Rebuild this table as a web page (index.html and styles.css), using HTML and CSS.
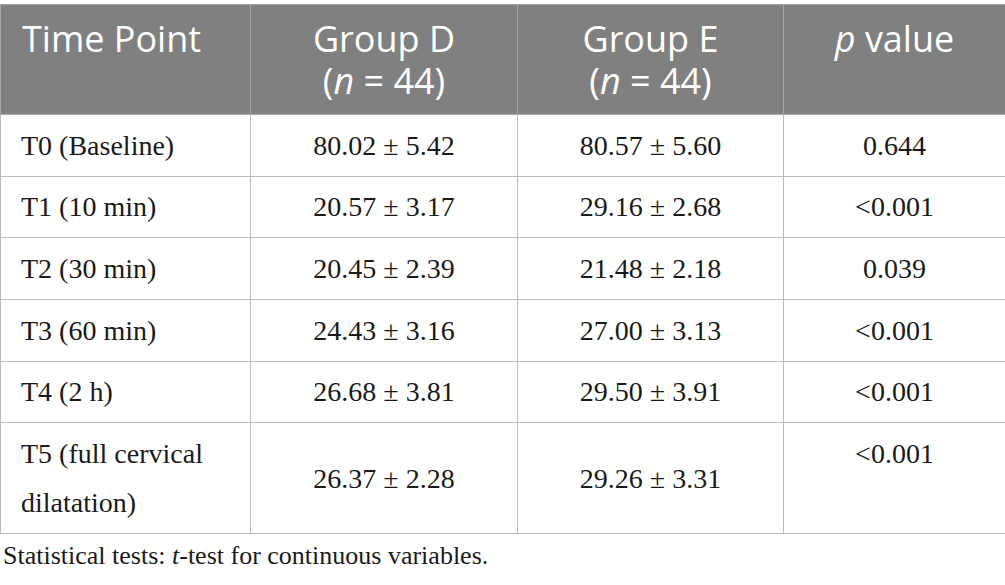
FILE: index.html
```html
<!DOCTYPE html>
<html>
<head>
<meta charset="utf-8">
<link rel="stylesheet" href="styles.css">
</head>
<body>
<div class="wrap">
<table class="data">
  <colgroup>
    <col class="c1"><col class="c2"><col class="c3"><col class="c4">
  </colgroup>
  <thead>
    <tr>
      <th class="left">Time Point</th>
      <th><span class="ln">Group D</span><span class="ln">(<i>n</i> = 44)</span></th>
      <th><span class="ln">Group E</span><span class="ln">(<i>n</i> = 44)</span></th>
      <th><i>p</i> value</th>
    </tr>
  </thead>
  <tbody>
    <tr><td class="left">T0 (Baseline)</td><td>80.02 ± 5.42</td><td>80.57 ± 5.60</td><td>0.644</td></tr>
    <tr><td class="left">T1 (10 min)</td><td>20.57 ± 3.17</td><td>29.16 ± 2.68</td><td>&lt;0.001</td></tr>
    <tr><td class="left">T2 (30 min)</td><td>20.45 ± 2.39</td><td>21.48 ± 2.18</td><td>0.039</td></tr>
    <tr><td class="left">T3 (60 min)</td><td>24.43 ± 3.16</td><td>27.00 ± 3.13</td><td>&lt;0.001</td></tr>
    <tr><td class="left">T4 (2 h)</td><td>26.68 ± 3.81</td><td>29.50 ± 3.91</td><td>&lt;0.001</td></tr>
    <tr><td class="left">T5 (full cervical dilatation)</td><td>26.37 ± 2.28</td><td>29.26 ± 3.31</td><td class="top">&lt;0.001</td></tr>
  </tbody>
</table>
<p class="note">Statistical tests: <i>t</i>-test for continuous variables.</p>
</div>
</body>
</html>
```

FILE: styles.css
```css
html, body {
  margin: 0;
  padding: 0;
  background: #ffffff;
}
.wrap {
  padding-top: 4px;
  width: 1005px;
}
.data {
  border-collapse: collapse;
  width: 1005px;
  table-layout: fixed;
  font-family: "Liberation Serif", "Times New Roman", serif;
  color: #1a1a1a;
}
.c1 { width: 250px; }
.c2 { width: 267px; }
.c3 { width: 266px; }
.c4 { width: 222px; }
.data th {
  background: #808080;
  color: #ffffff;
  font-family: "Open Sans", "Noto Sans", sans-serif;
  font-weight: 400;
  font-size: 36px;
  line-height: 42px;
  padding: 13px 10px 12px;
  text-align: center;
  vertical-align: top;
  border: 1px solid #a6a6a6;
}
.data th .ln {
  display: block;
  height: 42px;
}
.data th.left {
  text-align: left;
  padding-left: 21px;
}
.data td {
  font-size: 28px;
  line-height: 49.33px;
  padding: 5.67px 10px;
  text-align: center;
  vertical-align: middle;
  border: 1px solid #bcbcbc;
}
.data td.left {
  text-align: left;
  padding-left: 20px;
}
.data td.top {
  vertical-align: top;
}
.note {
  margin: 4px 0 0 3px;
  font-family: "Liberation Serif", "Times New Roman", serif;
  font-size: 26px;
  line-height: 36px;
  color: #1a1a1a;
}
```
